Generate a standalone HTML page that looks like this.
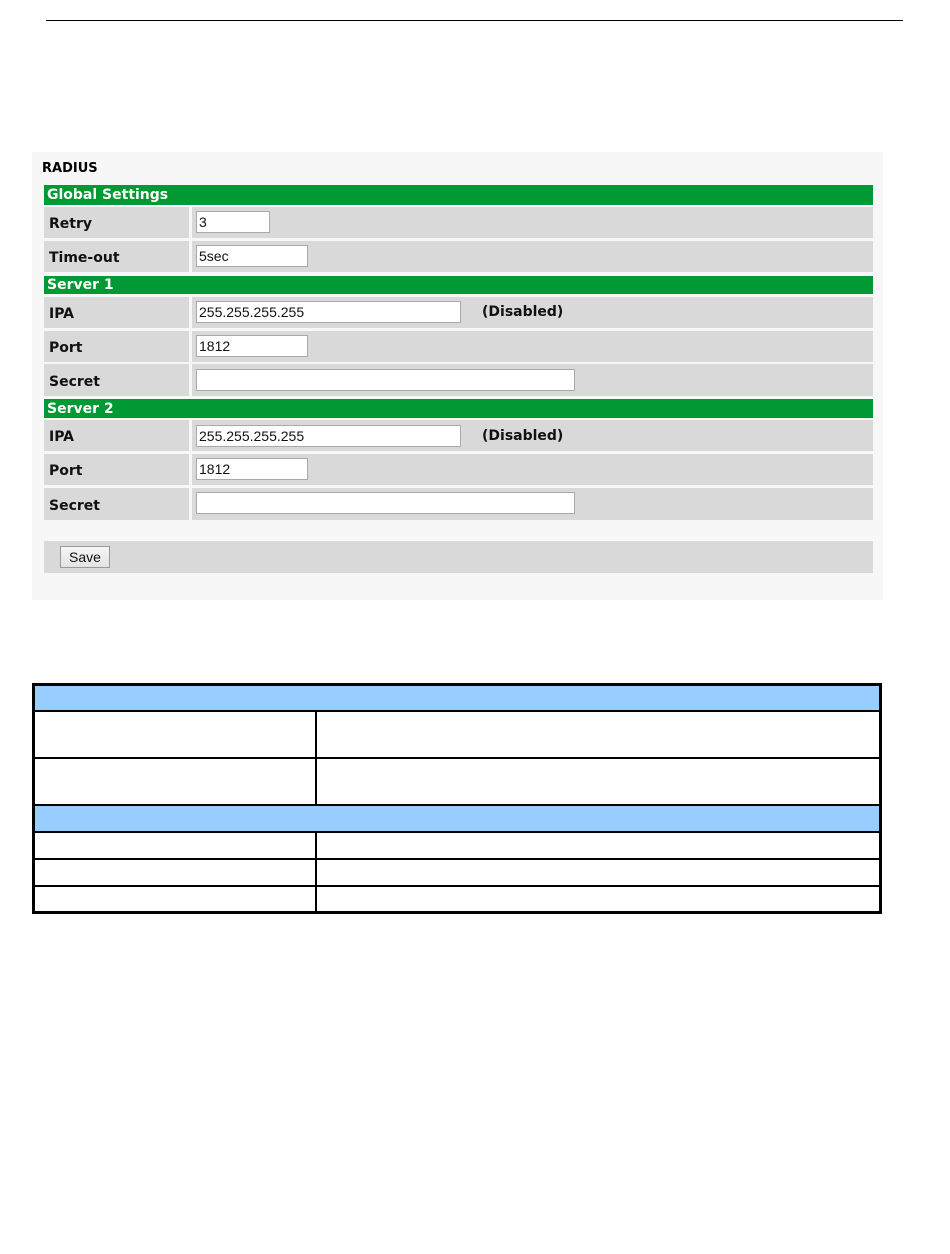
<!DOCTYPE html>
<html><head><style>
*{margin:0;padding:0;box-sizing:border-box}
body{width:950px;height:1254px;background:#fff;position:relative;overflow:hidden;font-family:"DejaVu Sans",sans-serif}
div{position:absolute}
.g{left:44px;width:829px;background:#009933;color:#fff;font-weight:bold;font-size:14px;padding-left:3px;line-height:20px}
.l{left:44px;width:145px;background:#d9d9d9;font-weight:bold;font-size:14px;color:#111;padding-left:5px;padding-top:2px}
.v{left:192px;width:681px;background:#d9d9d9}
.i{background:#fff;border:1px solid #a9a9a9;font-family:"Liberation Sans",sans-serif;font-size:14px;line-height:20px;padding-left:2px;color:#111}
.d{font-weight:bold;font-size:14px;color:#111}
.t{background:#fff;border-top:2px solid #000}
.b{background:#99ccff}
</style></head><body>
<div style="left:46px;top:20px;width:857px;height:1px;background:#000"></div>
<div style="left:32px;top:152px;width:851px;height:448px;background:#f7f7f7"></div>
<div style="left:42px;top:161px;font-weight:bold;font-size:13px;color:#000">RADIUS</div>

<div class="g" style="top:185px;height:20px">Global Settings</div>
<div class="l" style="top:207px;height:31px;line-height:31px">Retry</div>
<div class="v" style="top:207px;height:31px"></div>
<div class="i" style="left:196px;top:211px;width:74px;height:22px">3</div>
<div class="l" style="top:241px;height:31px;line-height:31px">Time-out</div>
<div class="v" style="top:241px;height:31px"></div>
<div class="i" style="left:196px;top:245px;width:112px;height:22px">5sec</div>

<div class="g" style="top:276px;height:18px;line-height:19px">Server 1</div>
<div class="l" style="top:297px;height:31px;line-height:31px">IPA</div>
<div class="v" style="top:297px;height:31px"></div>
<div class="i" style="left:196px;top:301px;width:265px;height:22px">255.255.255.255</div>
<div class="d" style="left:482px;top:304px">(Disabled)</div>
<div class="l" style="top:331px;height:31px;line-height:31px">Port</div>
<div class="v" style="top:331px;height:31px"></div>
<div class="i" style="left:196px;top:335px;width:112px;height:22px">1812</div>
<div class="l" style="top:364px;height:32px;line-height:32px">Secret</div>
<div class="v" style="top:364px;height:32px"></div>
<div class="i" style="left:196px;top:369px;width:379px;height:22px"></div>

<div class="g" style="top:399px;height:19px">Server 2</div>
<div class="l" style="top:420px;height:31px;line-height:31px">IPA</div>
<div class="v" style="top:420px;height:31px"></div>
<div class="i" style="left:196px;top:425px;width:265px;height:22px">255.255.255.255</div>
<div class="d" style="left:482px;top:428px">(Disabled)</div>
<div class="l" style="top:454px;height:31px;line-height:31px">Port</div>
<div class="v" style="top:454px;height:31px"></div>
<div class="i" style="left:196px;top:458px;width:112px;height:22px">1812</div>
<div class="l" style="top:488px;height:32px;line-height:32px">Secret</div>
<div class="v" style="top:488px;height:32px"></div>
<div class="i" style="left:196px;top:492px;width:379px;height:22px"></div>

<div style="left:44px;top:541px;width:829px;height:32px;background:#d9d9d9"></div>
<div style="left:60px;top:546px;width:50px;height:22px;border:1px solid #999;background:linear-gradient(#f6f6f6,#e3e3e3);font-family:'Liberation Sans',sans-serif;font-size:14px;text-align:center;line-height:20px;color:#111">Save</div>

<div style="left:32px;top:683px;width:850px;height:231px;border:2px solid #000;background:#000"></div>
<div class="b" style="left:35px;top:686px;width:844px;height:24px"></div>
<div class="t" style="left:35px;top:710px;width:280px;height:47px"></div>
<div class="t" style="left:317px;top:710px;width:562px;height:47px"></div>
<div class="t" style="left:35px;top:757px;width:280px;height:47px"></div>
<div class="t" style="left:317px;top:757px;width:562px;height:47px"></div>
<div class="b" style="left:35px;top:804px;width:844px;height:27px;border-top:2px solid #000"></div>
<div class="t" style="left:35px;top:831px;width:280px;height:27px"></div>
<div class="t" style="left:317px;top:831px;width:562px;height:27px"></div>
<div class="t" style="left:35px;top:858px;width:280px;height:27px"></div>
<div class="t" style="left:317px;top:858px;width:562px;height:27px"></div>
<div class="t" style="left:35px;top:885px;width:280px;height:26px"></div>
<div class="t" style="left:317px;top:885px;width:562px;height:26px"></div>
</body></html>
